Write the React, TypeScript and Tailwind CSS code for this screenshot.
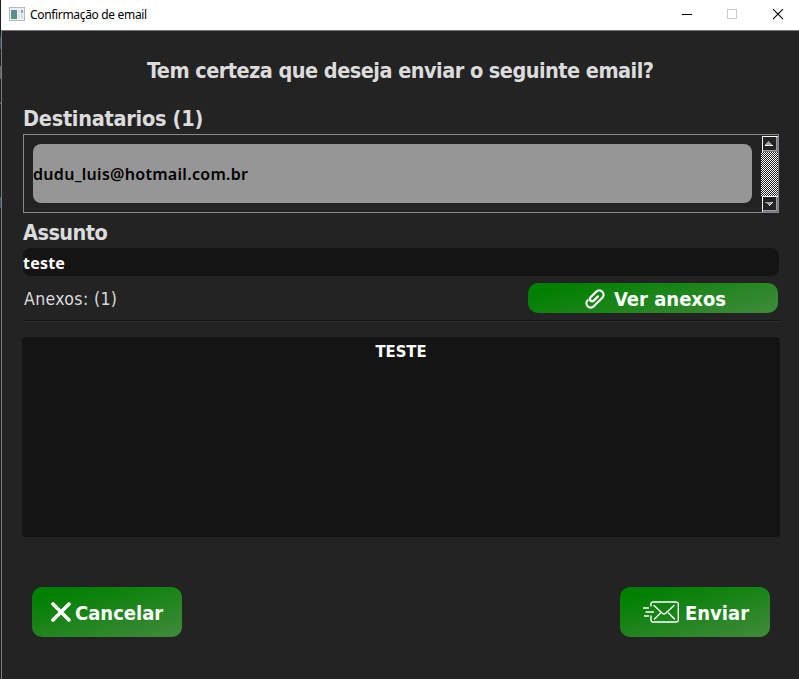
import type { ReactNode } from 'react';

const condensed = "font-['DejaVu_Sans_Condensed','DejaVu_Sans',sans-serif] whitespace-nowrap";
const heading = "font-['DejaVu_Sans_Condensed','DejaVu_Sans',sans-serif] font-bold whitespace-nowrap";
const body = "font-['Noto_Sans','Open_Sans',sans-serif] whitespace-nowrap";
const green = 'bg-[linear-gradient(165deg,#008000_12%,#3f8a3a_97%)] text-white';

function TitleBar() {
  return (
    <header className="flex h-[30px] shrink-0 items-start bg-white text-black">
      <svg className="ml-2 mt-[7px] shrink-0" width="16" height="14" viewBox="0 0 16 14" shapeRendering="crispEdges">
        <rect width="16" height="14" fill="#b3b9be" />
        <rect x="1" y="1" width="14" height="12" fill="#eef0f1" />
        <rect x="2" y="3" width="6" height="9" fill="#5a8aa6" />
        <path d="M2 8h3V6h3v6H2z" fill="#4f9580" />
        <rect x="9" y="3" width="2" height="9" fill="#dfe3e6" />
        <rect x="12" y="3" width="2" height="3" fill="#7ea5bd" />
        <rect x="12" y="7" width="2" height="5" fill="#d5dadd" />
      </svg>
      <span className={`${body} ml-[5px] mt-[7px] text-[12px] leading-4 tracking-[-0.33px]`}>Confirmação de email</span>
      <svg className="ml-auto mr-[15px] mt-[9px]" width="102" height="11" viewBox="0 0 102 11" fill="none">
        <path d="M0 5.5h10" stroke="#000" />
        <rect x="45.5" y=".5" width="9" height="9" stroke="#ccc" />
        <path d="M91 .1l10 10M101 .1l-10 10" stroke="#000" strokeWidth="1.1" />
      </svg>
    </header>
  );
}

function ArrowButton({ down = false }: { down?: boolean }) {
  return (
    <svg className="ml-px shrink-0" width="16" height="16" viewBox="0 0 16 16" shapeRendering="crispEdges">
      <rect width="16" height="16" fill="#fff" />
      <path d="M1 15h14V1h1v15H1z" fill="#777" />
      <path d="M1 14h13V1h1v14H1z" fill="#a0a0a4" />
      <rect x="1" y="1" width="13" height="13" fill="#232323" />
      {down ? (
        <>
          <path d="M3 6h8v1h-1v1H9v1H8v1H7V9H6V8H5V7H3z" fill="#a0a0a4" />
          <path d="M10 6h1v1h-1v1H9v1H8v1H7V9h1V8h1V7h1z" fill="#fff" />
        </>
      ) : (
        <>
          <path d="M6 5h1v1h1v1h1v1h1v1H3V8h1V7h1V6h1z" fill="#a0a0a4" />
          <rect x="3" y="9" width="8" height="1" fill="#fff" />
        </>
      )}
    </svg>
  );
}

function ActionButton({ children, className }: { children: ReactNode; className: string }) {
  return <button className={`${green} flex h-[50px] w-[150px] items-center rounded-[10px] ${className}`}>{children}</button>;
}

export default function App() {
  return (
    <div className="flex h-[679px] w-[799px] overflow-hidden bg-[#232323]">
      <aside className="flex w-px shrink-0 flex-col bg-[#1d1d1d] pt-[37px]">
        <div className="h-3 bg-[#344b62]" />
        <div className="mt-[17px] h-[13px] bg-[#666]" />
        <div className="mt-[23px] h-[2px] bg-[#555]" />
        <div className="mt-[93px] h-[11px] bg-[#3b5275]" />
      </aside>
      <div className="flex w-[798px] flex-col">
        <TitleBar />
        <main className="flex flex-1 flex-col border-l border-t border-[#777c84] pl-[21px] text-[#dcdcdc]">
          <h1 className={`${heading} ml-[124px] mt-[26px] h-7 text-[21.5px] leading-7 tracking-[-0.53px]`}>Tem certeza que deseja enviar o seguinte email?</h1>
          <h2 className={`${heading} mt-5 h-7 text-[21.5px] leading-7 tracking-[-0.27px]`}>Destinatarios (1)</h2>
          <section className="mt-px flex h-[79px] w-[756px] border border-[#828790]">
            <div className={`${body} ml-[9px] mt-[9px] flex h-[59px] w-[719px] items-center rounded-[8px] bg-[#969696] text-[16px] font-semibold tracking-[0.3px] text-black`}>
              dudu_luis@hotmail.com.br
            </div>
            <div className="ml-[9px] mt-px flex h-[76px] w-[17px] flex-col">
              <ArrowButton />
              <div className="flex-1 bg-[repeating-conic-gradient(#fff_0_25%,#232323_0_50%)] bg-[length:2px_2px]" />
              <ArrowButton down />
            </div>
          </section>
          <h2 className={`${heading} mt-[6px] h-7 text-[21.5px] leading-7 tracking-[-0.55px]`}>Assunto</h2>
          <div className={`${body} mt-px h-7 w-[756px] rounded-[8px] bg-[#141414] text-[16px] font-bold leading-[30px] tracking-[0.2px] text-white`}>teste</div>
          <div className="mt-[7px] flex h-[30px] w-[755px] justify-between">
            <span className={`${condensed} ml-px text-[17.5px] leading-[33px] tracking-[0.36px]`}>Anexos: (1)</span>
            <button className={`${green} ${heading} flex w-[250px] items-center rounded-[10px] pl-[57px] text-[20px]`}>
              <svg className="mt-[2px]" width="20" height="20" viewBox="0 0 20 20" fill="none" stroke="#fff" strokeWidth="2.2" strokeLinecap="round">
                <path transform="translate(10 10) rotate(-45)" d="M-6-4.300a4.300 4.300 0 0 0 0 8.600H6a4.300 4.300 0 0 0 0-8.600H-2a2.300 2.300 0 0 0 0 4.600H4" />
              </svg>
              <span className="ml-[9px] pt-px">Ver anexos</span>
            </button>
          </div>
          <div className="mt-[7px] h-[2px] w-[756px] border-b border-t border-b-[#2c2c2c] border-t-[#151515]" />
          <div className={`${heading} -ml-px mt-[15px] h-[200px] w-[758px] rounded-[4px] bg-[#141414] pt-[3px] text-center text-[16.5px] leading-6 text-white`}>TESTE</div>
          <footer className="ml-[9px] mt-[50px] flex w-[738px] justify-between">
            <ActionButton className="pl-[19px]">
              <svg width="20" height="20" viewBox="0 0 20 20" stroke="#fff" strokeWidth="3.6" strokeLinecap="round"><path d="M2 2l16 16M18 2L2 18" /></svg>
              <span className={`${heading} ml-1 pt-px text-[20px]`}>Cancelar</span>
            </ActionButton>
            <ActionButton className="pl-[23px]">
              <svg width="36" height="22" viewBox="0 0 36 22" fill="none" stroke="#fff" strokeWidth="1.4" strokeLinecap="round">
                <path d="M8 5V3q0-2 2-2h23q2.300 0 2.300 2v16q0 2-2.300 2H10q-2 0-2-2v-4M11 4.500l7.500 7q2.500 3 5 0l7.500-7M11.500 18l6-6M31.500 18l-6-6" />
                <path d="M0 7h5.500M3 11h7.500M1.500 15h4" />
              </svg>
              <span className={`${heading} ml-[6px] pt-px text-[20px]`}>Enviar</span>
            </ActionButton>
          </footer>
        </main>
      </div>
    </div>
  );
}
